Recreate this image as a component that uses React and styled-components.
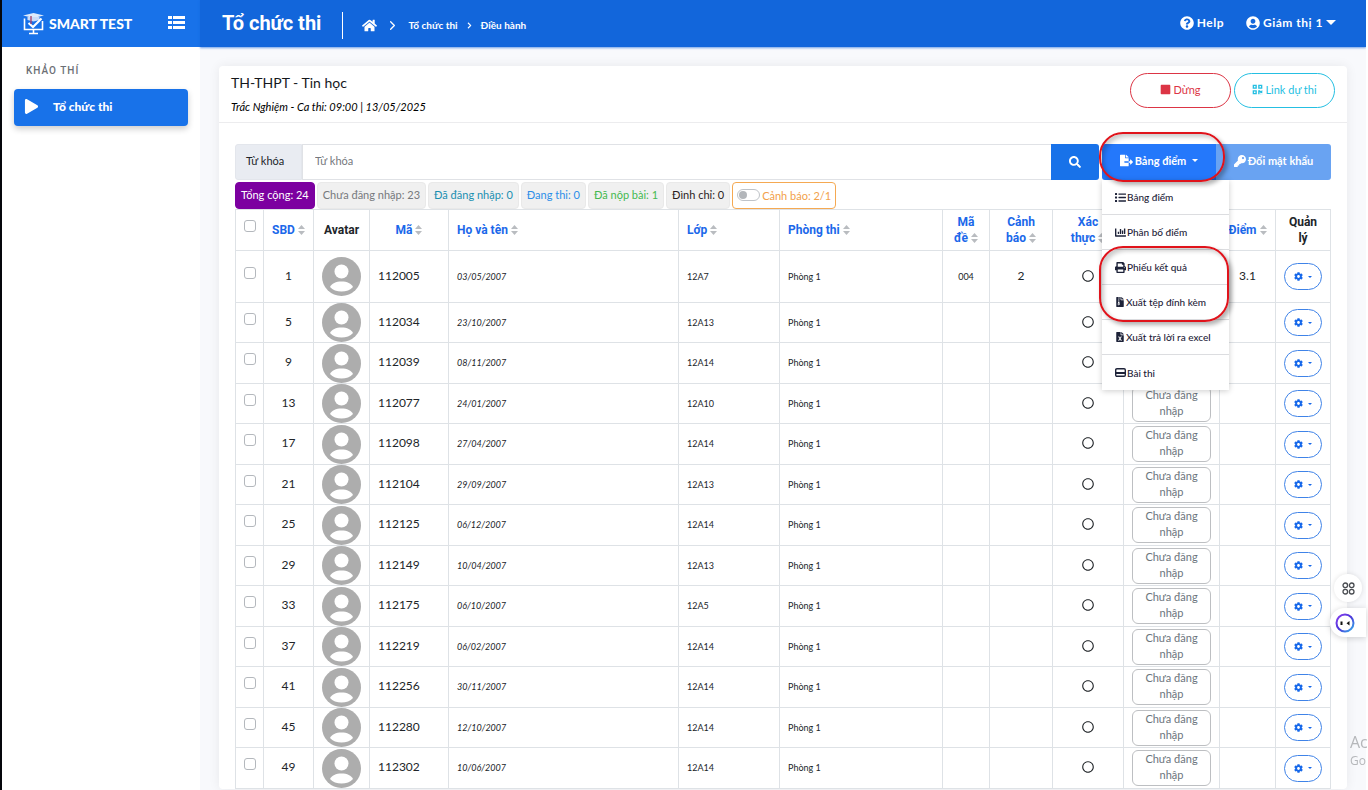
import styled, { createGlobalStyle } from "styled-components";
import {
  FaChartBar,
  FaChevronRight,
  FaCog,
  FaFileArchive,
  FaFileExcel,
  FaFileExport,
  FaHome,
  FaKey,
  FaList,
  FaPlay,
  FaPrint,
  FaQrcode,
  FaQuestionCircle,
  FaRegCircle,
  FaSearch,
  FaSquare,
  FaUserCircle,
} from "react-icons/fa";
import { FiChevronRight } from "react-icons/fi";

const GlobalStyle = createGlobalStyle`
  * {
    box-sizing: border-box;
  }
  body {
    margin: 0;
    font-family: Lato, "Noto Sans", sans-serif;
    font-size: 11px;
    color: #212529;
    background: #fff;
  }
  button,
  input {
    font-family: inherit;
    margin: 0;
  }
  a {
    color: inherit;
    text-decoration: none;
  }
`;

const Shell = styled.div`
  display: flex;
  height: 100vh;
  overflow: hidden;
  border-left: 2px solid #05070c;
  border-right: 2px solid #fff;
`;
const Sidebar = styled.aside`
  flex: 0 0 198px;
  background: #fff;
`;
const Brand = styled.div`
  display: flex;
  align-items: center;
  height: 47px;
  padding: 0 15px 0 20px;
  background: #1872e9;
  color: #fff;
`;
const BrandName = styled.span`
  flex: 1;
  margin-left: 4px;
  font-size: 14px;
  font-weight: 900;
`;
const IconButton = styled.button`
  display: flex;
  padding: 0 0 2px;
  border: none;
  background: none;
  color: #fff;
`;
const GroupLabel = styled.p`
  margin: 17px 0 11px 24px;
  font-family: Roboto, sans-serif;
  font-size: 10px;
  line-height: 14px;
  font-weight: 500;
  letter-spacing: 1px;
  color: #6c6f75;
`;
const NavItem = styled.a`
  display: flex;
  align-items: center;
  gap: 14px;
  height: 37px;
  margin: 0 12px;
  padding: 0 10px 2px;
  border-radius: 4px;
  background: #1872e9;
  box-shadow: 0 3px 6px rgba(0, 0, 0, 0.2);
  color: #fff;
  font-size: 12px;
  font-weight: 900;
  svg {
    font-size: 15px;
  }
`;

const Content = styled.div`
  flex: 1;
  min-width: 0;
  background: #f8f9fc;
`;
const TopBar = styled.header`
  display: flex;
  align-items: center;
  height: 47px;
  padding: 0 30px 0 22px;
  background: #1266db;
  box-shadow: 0 1px 2px rgba(18, 102, 219, 0.6);
  color: #fff;
`;
const PageTitle = styled.h1`
  margin: 0;
  padding: 0 21px 2px 0;
  font-family: Roboto, sans-serif;
  font-size: 20px;
  line-height: 24px;
  font-weight: 700;
`;
const Crumbs = styled.nav`
  flex: 1;
  display: flex;
  align-items: center;
  gap: 8px;
  height: 27px;
  margin-top: 3px;
  padding-left: 19px;
  border-left: 1px solid #fff;
  font-size: 10px;
  font-weight: 700;
`;
const TopLinks = styled.div`
  display: flex;
  gap: 22px;
`;
const TopLink = styled.a`
  display: flex;
  align-items: center;
  gap: 3px;
  padding-bottom: 2px;
  font-size: 12px;
  font-weight: 700;
  letter-spacing: 0.5px;
`;

const Card = styled.main`
  margin: 19px 19px 0 19px;
  background: #fff;
  border-radius: 4px;
  box-shadow: 0 0 12px rgba(0, 0, 0, 0.07);
`;
const CardHead = styled.div`
  display: flex;
  justify-content: space-between;
  padding: 7px 12px 8px 12px;
  border-bottom: 1px solid #ececee;
`;
const ExamName = styled.h2`
  margin: 0;
  font-size: 14px;
  line-height: 20px;
  font-weight: 400;
  color: #15181c;
`;
const ExamInfo = styled.p`
  margin: 7px 0 0;
  font-size: 11px;
  line-height: 14px;
  font-style: italic;
  color: #000;
`;
const HeadActions = styled.div`
  display: flex;
  gap: 3px;
`;
const PillButton = styled.button`
  display: flex;
  align-items: center;
  justify-content: center;
  gap: 2px;
  width: 101px;
  height: 35px;
  padding: 0 0 2px;
  border: 1px solid ${(props) => props.$color};
  border-radius: 18px;
  background: #fff;
  color: ${(props) => props.$color};
  font-size: 11px;
`;
const CardBody = styled.div`
  padding: 21px 16px 0;
`;

const SearchRow = styled.div`
  display: flex;
  height: 36px;
`;
const SearchLabel = styled.label`
  display: flex;
  align-items: center;
  width: 67px;
  padding: 0 0 3px 10px;
  border: 1px solid #e3e6ec;
  border-radius: 3px 0 0 3px;
  background: #e9ecf2;
`;
const SearchInput = styled.input`
  flex: 1;
  min-width: 0;
  padding: 0 12px 3px;
  border: 1px solid #e0e2e6;
  border-right: none;
  font-size: 11px;
  &::placeholder {
    color: #75787d;
  }
`;
const SearchButton = styled.button`
  display: flex;
  align-items: center;
  justify-content: center;
  width: 48px;
  margin-right: 3px;
  border: none;
  border-radius: 0 3px 3px 0;
  background: #1872e9;
  color: #fff;
  font-size: 12px;
`;
const MenuWrap = styled.div`
  position: relative;
`;
const ActionButton = styled.button`
  display: flex;
  align-items: center;
  justify-content: center;
  gap: 2px;
  width: ${(props) => (props.$muted ? 115 : 114)}px;
  height: 36px;
  padding: 0 0 3px;
  border: none;
  border-radius: ${(props) => (props.$muted ? "0 3px 3px 0" : "3px 0 0 3px")};
  background: ${(props) => (props.$muted ? "#69a3f2" : "#2478fb")};
  color: #fff;
  font-size: 11px;
  font-weight: 700;
`;
const Caret = styled.span`
  margin-left: 4px;
  border-top: 3px solid currentColor;
  border-left: 3px solid transparent;
  border-right: 3px solid transparent;
`;
const LargeCaret = styled(Caret)`
  margin-left: 0;
  border-top-width: 5px;
  border-left-width: 5px;
  border-right-width: 5px;
`;
const SmallCaret = styled(Caret)`
  border-top-width: 2px;
  border-left-width: 2px;
  border-right-width: 2px;
`;
const Menu = styled.div`
  position: absolute;
  z-index: 2;
  top: 36px;
  left: 0;
  width: 127px;
  background: #fff;
  box-shadow: 0 1px 6px rgba(0, 0, 0, 0.2);
`;
const MenuItem = styled.button`
  display: flex;
  align-items: center;
  gap: 1px;
  width: 100%;
  height: 35px;
  padding: 0 0 0 13px;
  border: none;
  border-bottom: 1px solid #dcdde0;
  background: none;
  color: #1d2238;
  font-size: 10px;
  font-weight: 500;
  white-space: nowrap;
  &:last-child {
    border-bottom: none;
  }
`;
const Highlight = styled.div`
  position: absolute;
  z-index: 3;
  top: ${(props) => props.$top}px;
  left: -3px;
  width: ${(props) => props.$width}px;
  height: ${(props) => props.$height}px;
  border: 2px solid #e0131b;
  border-radius: 24px;
  box-shadow: 3px 3px 4px rgba(0, 0, 0, 0.3), inset 3px 3px 4px rgba(0, 0, 0, 0.2);
  pointer-events: none;
`;

const Stats = styled.div`
  display: flex;
  gap: 2px;
  padding-top: 2px;
`;
const Stat = styled.button`
  height: 27px;
  padding: 0 5px 2px;
  border: 1px solid ${(props) => props.$bg || "#e9e9e9"};
  border-radius: 4px;
  background: ${(props) => props.$bg || "#f0f0f0"};
  color: ${(props) => props.$color};
  font-size: 11px;
  white-space: nowrap;
`;
const WarnToggle = styled.label`
  display: flex;
  align-items: center;
  gap: 2px;
  height: 27px;
  padding: 0 4px 1px;
  border: 1px solid #f5a952;
  border-radius: 4px;
  color: #f2a14a;
`;
const Switch = styled.input`
  appearance: none;
  display: flex;
  align-items: center;
  width: 23px;
  height: 12px;
  padding: 0 1px;
  border: 1px solid #bfc3c8;
  border-radius: 6px;
  background: #fff;
  &::before {
    content: "";
    width: 8px;
    height: 8px;
    border-radius: 50%;
    background: #b3b6ba;
  }
`;

const Table = styled.table`
  width: 100%;
  table-layout: fixed;
  border-spacing: 0;
  border-top: 1px solid #dee2e6;
  border-left: 1px solid #dee2e6;
`;
const Col = styled.col`
  width: ${(props) => props.$width}px;
`;
const Th = styled.th`
  height: 41px;
  padding: 0 8px 1px;
  border-right: 1px solid #dee2e6;
  border-bottom: 1px solid #dee2e6;
  color: ${(props) => (props.$sortable ? "#1b68ea" : "#212529")};
  font-family: Roboto, sans-serif;
  font-size: 12px;
  line-height: 16px;
  font-weight: 700;
  text-align: ${(props) => props.$align || "center"};
`;
const Row = styled.tr`
  height: 41px;
  &:nth-child(even) {
    height: 40px;
  }
  &:first-child {
    height: 52px;
  }
`;
const Td = styled.td`
  padding: 0 8px;
  border-right: 1px solid #dee2e6;
  border-bottom: 1px solid #dee2e6;
  font-size: ${(props) => (props.$small ? 9 : 12)}px;
  font-style: ${(props) => (props.$italic ? "italic" : "normal")};
  text-align: ${(props) => props.$align || "center"};
  line-height: 16px;
  svg {
    display: block;
    margin: 0 auto;
  }
`;
const NumberTd = styled(Td)`
  padding-bottom: 2px;
`;
const CheckTd = styled(Td)`
  padding: 0 0 8px;
`;
const Checkbox = styled.input`
  appearance: none;
  display: block;
  width: 12px;
  height: 12px;
  margin: 0 auto;
  border: 1px solid #b4b8bd;
  border-radius: 3px;
  background: #fff;
`;
const SortMark = styled.svg`
  display: inline-block;
  width: 7px;
  height: 10px;
  margin-left: 3px;
  fill: #b9bcc0;
  vertical-align: -1px;
`;
const StatusButton = styled.button`
  display: block;
  width: 100%;
  height: 36px;
  padding: 0 12px 2px;
  border: 1px solid #bdbfc2;
  border-radius: 6px;
  background: #fff;
  color: #6c757d;
  font-size: 11px;
  line-height: 16px;
`;
const GearButton = styled.button`
  display: flex;
  align-items: center;
  justify-content: center;
  gap: 1px;
  width: 38px;
  height: 27px;
  margin: 0 auto;
  padding: 0;
  border: 1px solid #3f83e8;
  border-radius: 14px;
  background: #fff;
  color: #1668ea;
  font-size: 9px;
  svg {
    margin: 0;
  }
`;

const Dock = styled.div`
  position: fixed;
  z-index: 4;
  right: 2px;
  top: 574px;
  display: flex;
  flex-direction: column;
  align-items: flex-end;
  gap: 6px;
`;
const DockApps = styled.button`
  display: flex;
  align-items: center;
  justify-content: center;
  width: 28px;
  height: 28px;
  margin-right: 4px;
  padding: 0;
  border: none;
  border-radius: 14px;
  background: #fff;
  box-shadow: 0 0 5px rgba(0, 0, 0, 0.12);
`;
const DockBot = styled.button`
  display: flex;
  align-items: center;
  width: 36px;
  height: 29px;
  padding: 0 0 0 5px;
  border: none;
  border-radius: 15px 0 0 15px;
  background: #fff;
  box-shadow: 0 1px 6px rgba(0, 0, 0, 0.18);
`;
const Watermark = styled.div`
  position: fixed;
  right: 0;
  bottom: 20px;
  width: 18px;
  overflow: hidden;
  color: #b5b7ba;
  font-family: "Open Sans", sans-serif;
`;
const WatermarkTitle = styled.div`
  font-size: 16px;
  line-height: 20px;
`;
const WatermarkText = styled.div`
  font-size: 12px;
  line-height: 18px;
`;

const stats = [
  { text: "Tổng cộng: 24", color: "#fff", bg: "#7c00a0" },
  { text: "Chưa đăng nhập: 23", color: "#76797d" },
  { text: "Đã đăng nhập: 0", color: "#1a8fb0" },
  { text: "Đang thi: 0", color: "#2c8ee8" },
  { text: "Đã nộp bài: 1", color: "#43b94f" },
  { text: "Đình chỉ: 0", color: "#2b1d1d" },
];

const waiting = "Chưa đăng nhập";

const students = [
  { sbd: 1, code: "112005", birth: "03/05/2007", group: "12A7", paper: "004", warn: 2, score: "3.1" },
  { sbd: 5, code: "112034", birth: "23/10/2007", group: "12A13" },
  { sbd: 9, code: "112039", birth: "08/11/2007", group: "12A14" },
  { sbd: 13, code: "112077", birth: "24/01/2007", group: "12A10", status: waiting },
  { sbd: 17, code: "112098", birth: "27/04/2007", group: "12A14", status: waiting },
  { sbd: 21, code: "112104", birth: "29/09/2007", group: "12A13", status: waiting },
  { sbd: 25, code: "112125", birth: "06/12/2007", group: "12A14", status: waiting },
  { sbd: 29, code: "112149", birth: "10/04/2007", group: "12A13", status: waiting },
  { sbd: 33, code: "112175", birth: "06/10/2007", group: "12A5", status: waiting },
  { sbd: 37, code: "112219", birth: "06/02/2007", group: "12A14", status: waiting },
  { sbd: 41, code: "112256", birth: "30/11/2007", group: "12A14", status: waiting },
  { sbd: 45, code: "112280", birth: "12/10/2007", group: "12A14", status: waiting },
  { sbd: 49, code: "112302", birth: "10/06/2007", group: "12A14", status: waiting },
];

const columnWidths = [28, 50, 56, 79, null, 101, 163, 47, 63, 71, 96, 56, 55];

function Logo() {
  return (
    <svg width="23" height="23" viewBox="0 0 23 23" fill="none">
      <path d="M1 3.5 11.5 1 22 3.5 11.5 6Z" fill="#fff" opacity="0.85" />
      <path d="M2.5 6.5V17.5H20.5V9" stroke="#fff" strokeWidth="1.6" />
      <path d="M5.5 5V8L11.5 9.5 17.5 8V5" fill="#c9dbf8" />
      <path d="M6.5 11 11 15 19.5 6.5" stroke="#fff" strokeWidth="2.2" />
      <path d="M9 4V12" stroke="#a8466e" strokeWidth="1.4" />
      <path d="M11.5 18V21M7 21.5H16" stroke="#fff" strokeWidth="1.6" />
    </svg>
  );
}

function MenuIcon() {
  return (
    <svg width="17" height="13" viewBox="0 0 17 13" fill="#fff">
      <path d="M0 0H4V3H0ZM5 0H17V3H5ZM0 5H4V8H0ZM5 5H17V8H5ZM0 10H4V13H0ZM5 10H17V13H5Z" />
    </svg>
  );
}

function Avatar() {
  return (
    <svg width="39" height="39" viewBox="0 0 39 39">
      <circle cx="19.5" cy="19.5" r="19.5" fill="#adadad" />
      <circle cx="19.5" cy="14.5" r="7" fill="#fff" />
      <path
        d="M8 30C9.5 26.5 14 24.5 19.5 24.5S29.5 26.5 31 30C28.5 33 24 34.5 19.5 34.5S10.5 33 8 30Z"
        fill="#fff"
      />
    </svg>
  );
}

function Sort() {
  return (
    <SortMark viewBox="0 0 7 10">
      <path d="M0 4 3.5 0 7 4ZM0 6H7L3.5 10Z" />
    </SortMark>
  );
}

function CardIcon() {
  return (
    <svg width="11" height="9" viewBox="0 0 11 9">
      <rect x="0.7" y="0.7" width="9.6" height="7.6" rx="1.2" fill="none" stroke="#1d2238" strokeWidth="1.4" />
      <path d="M0.5 4H10.5V6H0.5Z" fill="#1d2238" />
    </svg>
  );
}

function App() {
  return (
    <>
      <GlobalStyle />
      <Shell>
        <Sidebar>
          <Brand>
            <Logo />
            <BrandName>SMART TEST</BrandName>
            <IconButton aria-label="Menu">
              <MenuIcon />
            </IconButton>
          </Brand>
          <GroupLabel>KHẢO THÍ</GroupLabel>
          <NavItem href="#">
            <FaPlay />
            Tổ chức thi
          </NavItem>
        </Sidebar>
        <Content>
          <TopBar>
            <PageTitle>Tổ chức thi</PageTitle>
            <Crumbs>
              <FaHome size={15} />
              <FiChevronRight size={15} />
              <a href="#">Tổ chức thi</a>
              <FaChevronRight size={7} />
              <a href="#">Điều hành</a>
            </Crumbs>
            <TopLinks>
              <TopLink href="#">
                <FaQuestionCircle size={14} />
                Help
              </TopLink>
              <TopLink href="#">
                <FaUserCircle size={14} />
                Giám thị 1
                <LargeCaret />
              </TopLink>
            </TopLinks>
          </TopBar>
          <Card>
            <CardHead>
              <div>
                <ExamName>TH-THPT - Tin học</ExamName>
                <ExamInfo>Trắc Nghiệm - Ca thi: 09:00 | 13/05/2025</ExamInfo>
              </div>
              <HeadActions>
                <PillButton $color="#dc3545">
                  <FaSquare size={11} />
                  Dừng
                </PillButton>
                <PillButton $color="#25bfe2">
                  <FaQrcode size={11} />
                  Link dự thi
                </PillButton>
              </HeadActions>
            </CardHead>
            <CardBody>
              <SearchRow>
                <SearchLabel htmlFor="keyword">Từ khóa</SearchLabel>
                <SearchInput id="keyword" placeholder="Từ khóa" />
                <SearchButton aria-label="Tìm">
                  <FaSearch />
                </SearchButton>
                <MenuWrap>
                  <ActionButton>
                    <FaFileExport size={13} />
                    Bảng điểm
                    <Caret />
                  </ActionButton>
                  <Menu>
                    <MenuItem>
                      <FaList size={11} />
                      Bảng điểm
                    </MenuItem>
                    <MenuItem>
                      <FaChartBar size={11} />
                      Phân bố điểm
                    </MenuItem>
                    <MenuItem>
                      <FaPrint size={11} />
                      Phiếu kết quả
                    </MenuItem>
                    <MenuItem>
                      <FaFileArchive size={10} />
                      Xuất tệp đính kèm
                    </MenuItem>
                    <MenuItem>
                      <FaFileExcel size={10} />
                      Xuất trả lời ra excel
                    </MenuItem>
                    <MenuItem>
                      <CardIcon />
                      Bài thi
                    </MenuItem>
                  </Menu>
                  <Highlight $top={-12} $width={126} $height={50} />
                  <Highlight $top={102} $width={130} $height={76} />
                </MenuWrap>
                <ActionButton $muted>
                  <FaKey size={12} />
                  Đổi mật khẩu
                </ActionButton>
              </SearchRow>
              <Stats>
                {stats.map((stat) => (
                  <Stat key={stat.text} $color={stat.color} $bg={stat.bg}>
                    {stat.text}
                  </Stat>
                ))}
                <WarnToggle>
                  <Switch type="checkbox" />
                  Cảnh báo: 2/1
                </WarnToggle>
              </Stats>
              <Table>
                <colgroup>
                  {columnWidths.map((width, i) =>
                    width ? <Col key={i} $width={width} /> : <col key={i} />
                  )}
                </colgroup>
                <thead>
                  <tr>
                    <CheckTd as="th">
                      <Checkbox type="checkbox" aria-label="Chọn tất cả" />
                    </CheckTd>
                    <Th $sortable>
                      SBD
                      <Sort />
                    </Th>
                    <Th>Avatar</Th>
                    <Th $sortable>
                      Mã
                      <Sort />
                    </Th>
                    <Th $sortable $align="left">
                      Họ và tên
                      <Sort />
                    </Th>
                    <Th $sortable $align="left">
                      Lớp
                      <Sort />
                    </Th>
                    <Th $sortable $align="left">
                      Phòng thi
                      <Sort />
                    </Th>
                    <Th $sortable>
                      Mã đề
                      <Sort />
                    </Th>
                    <Th $sortable>
                      Cảnh báo
                      <Sort />
                    </Th>
                    <Th $sortable>
                      Xác
                      <br />
                      thực
                      <Sort />
                    </Th>
                    <Th />
                    <Th $sortable>
                      Điểm
                      <Sort />
                    </Th>
                    <Th>Quản lý</Th>
                  </tr>
                </thead>
                <tbody>
                  {students.map((student) => (
                    <Row key={student.sbd}>
                      <CheckTd>
                        <Checkbox type="checkbox" aria-label={student.code} />
                      </CheckTd>
                      <NumberTd>{student.sbd}</NumberTd>
                      <Td>
                        <Avatar />
                      </Td>
                      <NumberTd $align="left">{student.code}</NumberTd>
                      <Td $align="left" $small $italic>
                        {student.birth}
                      </Td>
                      <Td $align="left" $small>
                        {student.group}
                      </Td>
                      <Td $align="left" $small>
                        Phòng 1
                      </Td>
                      <Td $small>{student.paper}</Td>
                      <NumberTd>{student.warn}</NumberTd>
                      <NumberTd>
                        <FaRegCircle size={12} />
                      </NumberTd>
                      <Td>
                        {student.status && <StatusButton>{student.status}</StatusButton>}
                      </Td>
                      <NumberTd>{student.score}</NumberTd>
                      <Td>
                        <GearButton aria-label="Quản lý">
                          <FaCog />
                          <SmallCaret />
                        </GearButton>
                      </Td>
                    </Row>
                  ))}
                </tbody>
              </Table>
            </CardBody>
          </Card>
        </Content>
      </Shell>
      <Dock>
        <DockApps aria-label="Ứng dụng">
          <svg width="13" height="13" viewBox="0 0 13 13" fill="none" stroke="#4a4d52" strokeWidth="1.3">
            <circle cx="3.3" cy="3.3" r="2.3" />
            <circle cx="9.7" cy="3.3" r="2.3" />
            <circle cx="3.3" cy="9.7" r="2.3" />
            <circle cx="9.7" cy="9.7" r="2.3" />
          </svg>
        </DockApps>
        <DockBot aria-label="Trợ lý">
          <svg width="20" height="20" viewBox="0 0 20 20">
            <defs>
              <linearGradient id="ring" x1="0" y1="0" x2="1" y2="1">
                <stop offset="0" stopColor="#8a3df0" />
                <stop offset="0.5" stopColor="#4a35d8" />
                <stop offset="1" stopColor="#35b6ec" />
              </linearGradient>
            </defs>
            <circle cx="10" cy="10" r="8.5" fill="#fff" stroke="url(#ring)" strokeWidth="2" />
            <path d="M5.5 8.5H7.5V12H5.5ZM14.5 8V12.5L11.5 10.3Z" fill="#111" />
          </svg>
        </DockBot>
      </Dock>
      <Watermark>
        <WatermarkTitle>Ac</WatermarkTitle>
        <WatermarkText>Go</WatermarkText>
      </Watermark>
    </>
  );
}

export default App;
